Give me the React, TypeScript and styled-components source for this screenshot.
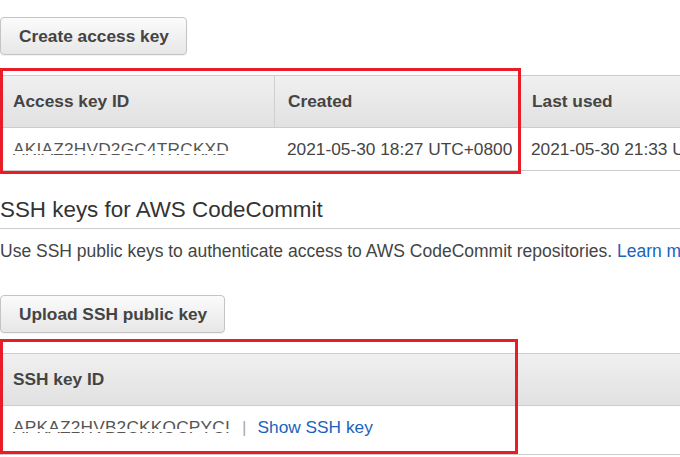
import React from "react";
import styled, { createGlobalStyle } from "styled-components";

const GlobalStyle = createGlobalStyle`
  html, body { margin: 0; padding: 0; background: #fff; }
  body { width: 680px; height: 457px; overflow: hidden; }
`;

const Page = styled.div`
  width: 680px;
  height: 457px;
  overflow: hidden;
  font-family: "Liberation Sans", Arial, sans-serif;
  color: #444;
  padding-top: 17px;
  box-sizing: border-box;
`;

const Button = styled.button<{ $mt?: number }>`
  display: block;
  margin: ${(p) => p.$mt ?? 0}px 0 0 0;
  height: 38px;
  padding: 0 17px 0 18px;
  font-family: "Liberation Sans", Arial, sans-serif;
  font-size: 17.3px;
  font-weight: bold;
  color: #444;
  background: linear-gradient(#fbfbfb, #e7e7e7);
  border: 1px solid #c4c4c4;
  border-radius: 4px;
  box-shadow: 0 1px 1px rgba(0, 0, 0, 0.06);
  white-space: nowrap;
`;

const Annotated = styled.div`
  position: relative;
  margin-top: 20px;
`;

const Highlight = styled.div<{ $w: number; $top: number; $bottom: number }>`
  position: absolute;
  left: 0;
  top: ${(p) => p.$top}px;
  bottom: ${(p) => p.$bottom}px;
  width: ${(p) => p.$w}px;
  border: 3px solid #e81d27;
  box-sizing: border-box;
  pointer-events: none;
`;

const Table = styled.div`
  width: 780px;
  border-top: 1px solid #cccccc;
`;

const Row = styled.div<{ $cols: string; $h: number; $head?: boolean; $pb?: number }>`
  display: grid;
  grid-template-columns: ${(p) => p.$cols};
  height: ${(p) => p.$h}px;
  box-sizing: content-box;
  border-bottom: 1px solid #cccccc;
  background: ${(p) => (p.$head ? "linear-gradient(#f0f0f0, #e1e1e1)" : "#fff")};
`;

const HeadCell = styled.div<{ $divider?: boolean }>`
  display: flex;
  align-items: center;
  padding-left: 13px;
  font-size: 17.3px;
  font-weight: bold;
  color: #444;
  white-space: nowrap;
  border-right: ${(p) => (p.$divider ? "1px solid #cfcfcf" : "none")};
`;

const Cell = styled.div<{ $pl?: number; $pb?: number }>`
  display: flex;
  align-items: center;
  padding-left: ${(p) => p.$pl ?? 13}px;
  padding-bottom: ${(p) => p.$pb ?? 0}px;
  font-size: 17.3px;
  color: #444;
  white-space: nowrap;
`;

const MaskedKey = styled.span`
  position: relative;
  display: inline-block;
  line-height: 20px;
  letter-spacing: 0.2px;
  color: #555;
  &::after {
    content: "";
    position: absolute;
    left: -2px;
    right: -2px;
    top: 11.5px;
    height: 3.2px;
    background: #fff;
  }
`;

const Pipe = styled.span`
  color: #aaa;
  margin: 0 11px 0 12px;
`;

const Link = styled.a`
  color: #1a63bd;
  text-decoration: none;
`;

const SectionTitle = styled.h2`
  margin: 25px 0 0 0;
  padding-bottom: 4px;
  font-size: 22.4px;
  line-height: 28px;
  font-weight: normal;
  color: #333;
  border-bottom: 1px solid #cccccc;
  white-space: nowrap;
`;

const Description = styled.p`
  margin: 12px 0 0 0;
  font-size: 17.5px;
  line-height: 20px;
  color: #444;
  white-space: nowrap;
`;

export default function App() {
  return (
    <>
      <GlobalStyle />
      <Page>
        <Button>Create access key</Button>
        <Annotated>
          <Table>
            <Row $cols="275px 244px 1fr" $h={51} $head>
              <HeadCell $divider>Access key ID</HeadCell>
              <HeadCell $divider>Created</HeadCell>
              <HeadCell>Last used</HeadCell>
            </Row>
            <Row $cols="275px 244px 1fr" $h={42}>
              <Cell>
                <MaskedKey>AKIAZ2HVD2GC4TRCKXD</MaskedKey>
              </Cell>
              <Cell $pl={12}>2021-05-30 18:27 UTC+0800</Cell>
              <Cell $pl={12}>2021-05-30 21:33 UTC+0800</Cell>
            </Row>
          </Table>
          <Highlight $w={521} $top={-7} $bottom={-3} />
        </Annotated>

        <SectionTitle>SSH keys for AWS CodeCommit</SectionTitle>
        <Description>
          Use SSH public keys to authenticate access to AWS CodeCommit repositories.{" "}
          <Link href="#">Learn more</Link>
        </Description>

        <Button $mt={34}>Upload SSH public key</Button>
        <Annotated>
          <Table>
            <Row $cols="1fr" $h={51} $head>
              <HeadCell>SSH key ID</HeadCell>
            </Row>
            <Row $cols="1fr" $h={48}>
              <Cell $pb={6}>
                <MaskedKey>APKAZ2HVB2CKKOCPYCI</MaskedKey>
                <Pipe>|</Pipe>
                <Link href="#">Show SSH key</Link>
              </Cell>
            </Row>
          </Table>
          <Highlight $w={518} $top={-14} $bottom={1} />
        </Annotated>
      </Page>
    </>
  );
}
